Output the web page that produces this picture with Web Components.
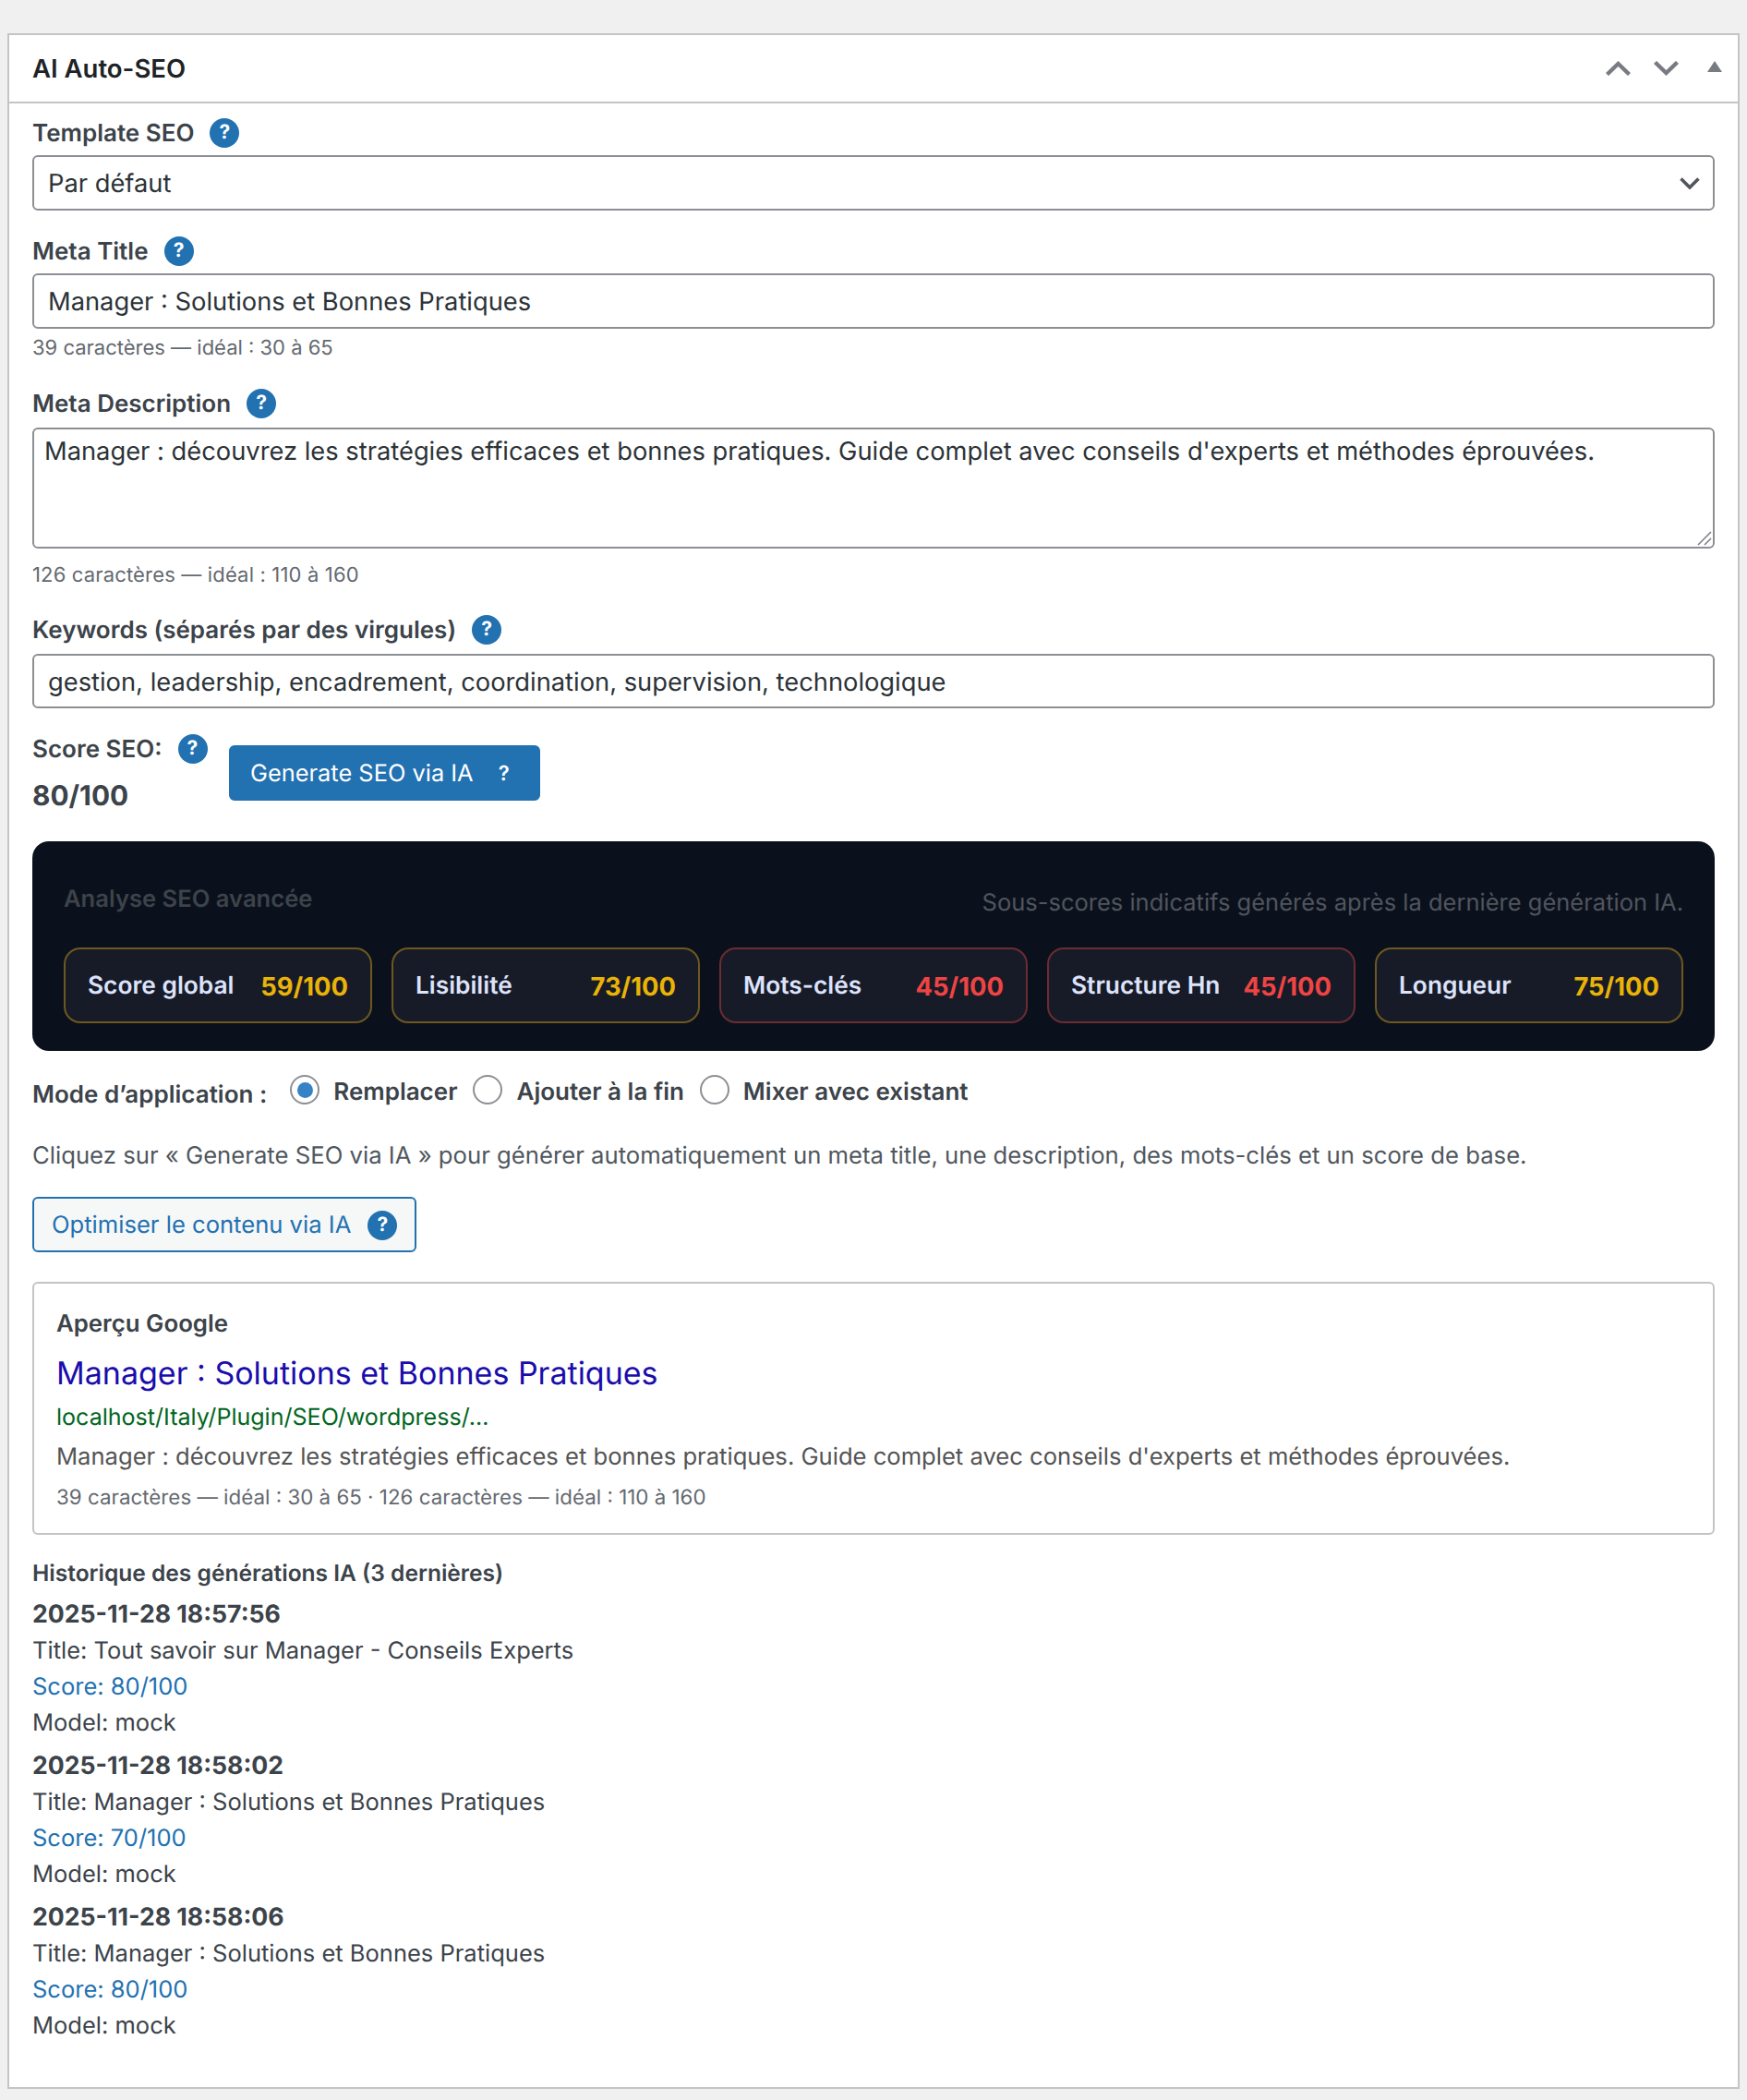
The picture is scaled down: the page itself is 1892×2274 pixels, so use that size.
<!doctype html>
<html lang="fr">
<head>
<meta charset="utf-8">
<title>AI Auto-SEO</title>
<style>
    html, body { margin: 0; padding: 0; background: #f0f0f1; }
    body { padding: 36px 8px 12px; font-family: Inter, "Liberation Sans", sans-serif; color: #3c434a; text-rendering: geometricPrecision; }
</style>
</head>
<body>
<wp-postbox heading="AI Auto-SEO">
    <seo-field label="Template SEO" style="margin-top:16px">
        <text-box kind="select">Par défaut</text-box>
    </seo-field>
    <seo-field label="Meta Title" note="39 caractères — idéal : 30 à 65" style="margin-top:28px">
        <text-box>Manager : Solutions et Bonnes Pratiques</text-box>
    </seo-field>
    <seo-field label="Meta Description" note="126 caractères — idéal : 110 à 160" style="margin-top:30px; --label-gap:10px; --note-gap:16px; --note-spacing:.16px">
        <text-box kind="textarea">Manager : découvrez les stratégies efficaces et bonnes pratiques. Guide complet avec conseils d'experts et méthodes éprouvées.</text-box>
    </seo-field>
    <seo-field label="Keywords (séparés par des virgules)" style="margin-top:29px; --label-gap:10px">
        <text-box style="height:59px">gestion, leadership, encadrement, coordination, supervision, technologique</text-box>
    </seo-field>

    <score-row label="Score SEO:" value="80/100" style="margin-top:28px">
        <wp-button primary>Generate SEO via IA</wp-button>
    </score-row>

    <seo-analysis heading="Analyse SEO avancée" sub="Sous-scores indicatifs générés après la dernière génération IA." style="margin-top:29px">
        <score-pill label="Score global" value="59/100" tone="warn"></score-pill>
        <score-pill label="Lisibilité" value="73/100" tone="warn"></score-pill>
        <score-pill label="Mots-clés" value="45/100" tone="bad"></score-pill>
        <score-pill label="Structure Hn" value="45/100" tone="bad"></score-pill>
        <score-pill label="Longueur" value="75/100" tone="warn"></score-pill>
    </seo-analysis>

    <mode-row label="Mode d’application :" style="margin-top:26px">
        <radio-option checked>Remplacer</radio-option>
        <radio-option>Ajouter à la fin</radio-option>
        <radio-option>Mixer avec existant</radio-option>
    </mode-row>

    <help-text style="margin-top:32px">Cliquez sur « Generate SEO via IA » pour générer automatiquement un meta title, une description, des mots-clés et un score de base.</help-text>

    <wp-button style="margin-top:26px">Optimiser le contenu via IA</wp-button>

    <serp-preview style="margin-top:32px"
        site-title="Manager : Solutions et Bonnes Pratiques"
        url="localhost/Italy/Plugin/SEO/wordpress/…"
        description="Manager : découvrez les stratégies efficaces et bonnes pratiques. Guide complet avec conseils d'experts et méthodes éprouvées."
        counts="39 caractères — idéal : 30 à 65 · 126 caractères — idéal : 110 à 160"></serp-preview>

    <history-list heading="Historique des générations IA (3 dernières)" style="margin-top:23px">
        <history-entry date="2025-11-28 18:57:56" entry-title="Tout savoir sur Manager - Conseils Experts" score="80/100" model="mock"></history-entry>
        <history-entry date="2025-11-28 18:58:02" entry-title="Manager : Solutions et Bonnes Pratiques" score="70/100" model="mock"></history-entry>
        <history-entry date="2025-11-28 18:58:06" entry-title="Manager : Solutions et Bonnes Pratiques" score="80/100" model="mock"></history-entry>
    </history-list>
</wp-postbox>

<script>
(function() {
    "use strict";

    // small helper, every element renders once from its attributes
    function define(name, css, html) {
        customElements.define(name, class extends HTMLElement {
            constructor() {
                super();
                const root = this.attachShadow({mode: 'open'});
                root.innerHTML = `<style>${css}</style>${typeof html === 'function' ? html(this) : html}`;
            }
            connectedCallback() {
                const root = this.shadowRoot;
                root.querySelectorAll('[data-attr]').forEach(el => {
                    el.textContent = this.getAttribute(el.dataset.attr) || '';
                });
            }
        });
    }

    define('help-tip', `
        :host { display: inline-flex; flex: none; width: 32px; height: 32px; border-radius: 50%; background: #2271b1;
                color: #fff; align-items: center; justify-content: center;
                font: 700 21px/32px Inter, "Liberation Sans", sans-serif; }
    `, `?`);

    define('wp-postbox', `
        :host { display: block; background: #fff; border: 2px solid #c3c4c7; }
        header { display: flex; align-items: center; height: 72px; padding: 0 17px 0 25px; border-bottom: 2px solid #c3c4c7; }
        h2 { margin: 0; flex: 1; font: 600 27.5px/72px Inter, "Liberation Sans", sans-serif; color: #1d2327; }
        svg { display: block; margin-top: -1px; }
        .up { margin-right: 25px; }
        .down { margin-right: 31px; }
        .toggle { margin-top: -5px; }
        main { display: block; padding: 0 25px 39px; }
    `, `
        <header>
            <h2 data-attr="heading"></h2>
            <svg class="up" width="27" height="16" viewBox="0 0 27 16"><path d="M1.5 14.5 13.5 3l12 11.5" fill="none" stroke="#787c82" stroke-width="4.4"/></svg>
            <svg class="down" width="27" height="16" viewBox="0 0 27 16"><path d="M1.5 1.5 13.5 13l12-11.5" fill="none" stroke="#787c82" stroke-width="4.4"/></svg>
            <svg class="toggle" width="16" height="12" viewBox="0 0 16 12"><path d="M8 0l8 12H0z" fill="#787c82"/></svg>
        </header>
        <main><slot></slot></main>
    `);

    define('seo-field', `
        :host { display: block; }
        .label { display: flex; align-items: center; gap: 17px; height: 32px; margin-bottom: var(--label-gap, 8px);
                 font: 600 26px/32px Inter, "Liberation Sans", sans-serif; color: #3c434a; }
        .label span { margin-top: 2px; }
        .note { margin-top: var(--note-gap, 8px); letter-spacing: var(--note-spacing, 0); font: 400 22px/27px Inter, "Liberation Sans", sans-serif; color: #646970; }
        .note:empty { display: none; }
    `, `
        <div class="label"><span data-attr="label"></span><help-tip></help-tip></div>
        <slot></slot>
        <div class="note" data-attr="note"></div>
    `);

    define('text-box', `
        :host { display: flex; align-items: center; position: relative; box-sizing: border-box; height: 60px;
                padding: 2px 15px 0; border: 2px solid #8c8f94; border-radius: 6px; background: #fff;
                font: 400 27.3px/36px Inter, "Liberation Sans", sans-serif; color: #2c3338; }
        :host([kind="select"]) { justify-content: space-between; padding-right: 14px; }
        :host([kind="textarea"]) { display: block; height: 131px; padding: 6px 11px; }
        svg { display: none; }
        :host([kind="select"]) .arrow { display: block; margin-top: -2px; }
        :host([kind="textarea"]) .grip { display: block; position: absolute; right: 1px; bottom: 1px; }
    `, `
        <span><slot></slot></span>
        <svg class="arrow" width="22" height="13" viewBox="0 0 22 13"><path d="M1.5 1.5 11 11l9.5-9.5" fill="none" stroke="#50575e" stroke-width="3.6"/></svg>
        <svg class="grip" width="16" height="16" viewBox="0 0 16 16"><path d="M1 15 15 1M8 15l7-7" fill="none" stroke="#787c82" stroke-width="1.5"/></svg>
    `);

    define('wp-button', `
        :host { display: inline-flex; align-items: center; gap: 18px; box-sizing: border-box; height: 60px; padding: 2px 19px 0;
                border: 2px solid #2271b1; border-radius: 6px; background: #f6f7f7; color: #2271b1;
                font: 400 25.6px/36px Inter, "Liberation Sans", sans-serif; vertical-align: top; }
        :host([primary]) { gap: 17px; padding: 2px 21px 0; background: #2271b1; color: #fff; font-size: 25.4px; }
        :host([primary]) help-tip { font-size: 22px; font-weight: 600; }
    `, `<slot></slot><help-tip></help-tip>`);

    define('score-row', `
        :host { display: flex; align-items: flex-start; gap: 24px; }
        .left { width: 189px; }
        .label { display: flex; align-items: center; gap: 17px; height: 32px; white-space: nowrap;
                 font: 600 26px/32px Inter, "Liberation Sans", sans-serif; color: #3c434a; }
        .label span { margin-top: 2px; }
        .value { margin-top: 16px; font: 700 29.8px/39px Inter, "Liberation Sans", sans-serif; color: #3c434a; }
        .action { margin-top: 12px; }
    `, `
        <div class="left">
            <div class="label"><span data-attr="label"></span><help-tip></help-tip></div>
            <div class="value" data-attr="value"></div>
        </div>
        <div class="action"><slot></slot></div>
    `);

    define('seo-analysis', `
        :host { display: block; padding: 47px 34px 30px; border-radius: 18px; background: #0b111c; }
        .top { display: flex; justify-content: space-between; align-items: flex-start; height: 32px; margin-bottom: 36px; }
        .title { font: 600 25.6px/32px Inter, "Liberation Sans", sans-serif; color: #3c434a; }
        .sub { margin-top: 4px; font: 400 25.5px/32px Inter, "Liberation Sans", sans-serif; color: #50555e; }
        .grid { display: grid; grid-template-columns: repeat(5, 1fr); gap: 21px; }
    `, `
        <div class="top"><span class="title" data-attr="heading"></span><span class="sub" data-attr="sub"></span></div>
        <div class="grid"><slot></slot></div>
    `);

    define('score-pill', `
        :host { display: flex; align-items: center; justify-content: space-between; box-sizing: border-box; height: 82px;
                padding: 2px 24px 0; border: 2px solid #6e5820; border-radius: 18px; background: #171b27; }
        :host([tone="bad"]) { border-color: #6c2c31; }
        .label { font: 600 26.3px/34px Inter, "Liberation Sans", sans-serif; color: #dde3fb; }
        .value { font: 700 27.4px/34px Inter, "Liberation Sans", sans-serif; color: #eab308; }
        :host([tone="bad"]) .value { color: #ef4444; }
    `, `<span class="label" data-attr="label"></span><span class="value" data-attr="value"></span>`);

    define('mode-row', `
        :host { display: flex; align-items: flex-start; }
        .label { margin: 6px 25px 0 0; font: 600 26px/32px Inter, "Liberation Sans", sans-serif; color: #3c434a; }
        .options { display: flex; gap: 17px; }
    `, `<span class="label" data-attr="label"></span><div class="options"><slot></slot></div>`);

    define('radio-option', `
        :host { display: flex; align-items: flex-start; gap: 15px; font: 600 26px/32px Inter, "Liberation Sans", sans-serif; color: #3c434a; }
        .dot { display: flex; align-items: center; justify-content: center; box-sizing: border-box; width: 32px; height: 32px;
               border: 2px solid #8c8f94; border-radius: 50%; background: #fff; }
        :host([checked]) .dot::before { content: ""; width: 17px; height: 17px; border-radius: 50%; background: #3582c4; }
        .text { margin-top: 3px; }
    `, `<span class="dot"></span><span class="text"><slot></slot></span>`);

    define('help-text', `
        :host { display: block; font: 400 25.7px/36px Inter, "Liberation Sans", sans-serif; color: #50575e; }
    `, `<slot></slot>`);

    define('serp-preview', `
        :host { display: block; padding: 26px 24px 23px; border: 2px solid #c3c4c7; border-radius: 6px; background: #fff; }
        div { white-space: nowrap; }
        .head { font: 600 25.8px/36px Inter, "Liberation Sans", sans-serif; color: #3c434a; }
        .title { margin-top: 14px; font: 400 34px/44px Inter, "Liberation Sans", sans-serif; color: #1a0dab; }
        .url { margin-top: 8px; font: 400 25.05px/34px Inter, "Liberation Sans", sans-serif; color: #006621; }
        .desc { margin-top: 9px; font: 400 25.6px/34px Inter, "Liberation Sans", sans-serif; color: #545454; }
        .counts { margin-top: 12px; font: 400 22.35px/30px Inter, "Liberation Sans", sans-serif; color: #646970; }
    `, `
        <div class="head">Aperçu Google</div>
        <div class="title" data-attr="site-title"></div>
        <div class="url" data-attr="url"></div>
        <div class="desc" data-attr="description"></div>
        <div class="counts" data-attr="counts"></div>
    `);

    define('history-list', `
        :host { display: block; }
        h4 { margin: 0 0 8px; font: 600 24.55px/36px Inter, "Liberation Sans", sans-serif; color: #3c434a; }
    `, `<h4 data-attr="heading"></h4><slot></slot>`);

    define('history-entry', `
        :host { display: block; margin-bottom: 8px; font: 400 25.5px/39px Inter, "Liberation Sans", sans-serif; color: #3c434a; }
        .date { font-size: 26.65px; font-weight: 700; }
        .score { color: #2271b1; }
    `, el => `
        <div class="date">${el.getAttribute('date')}</div>
        <div>Title: ${el.getAttribute('entry-title')}</div>
        <div class="score">Score: ${el.getAttribute('score')}</div>
        <div>Model: ${el.getAttribute('model')}</div>
    `);
})();
</script>
</body>
</html>
